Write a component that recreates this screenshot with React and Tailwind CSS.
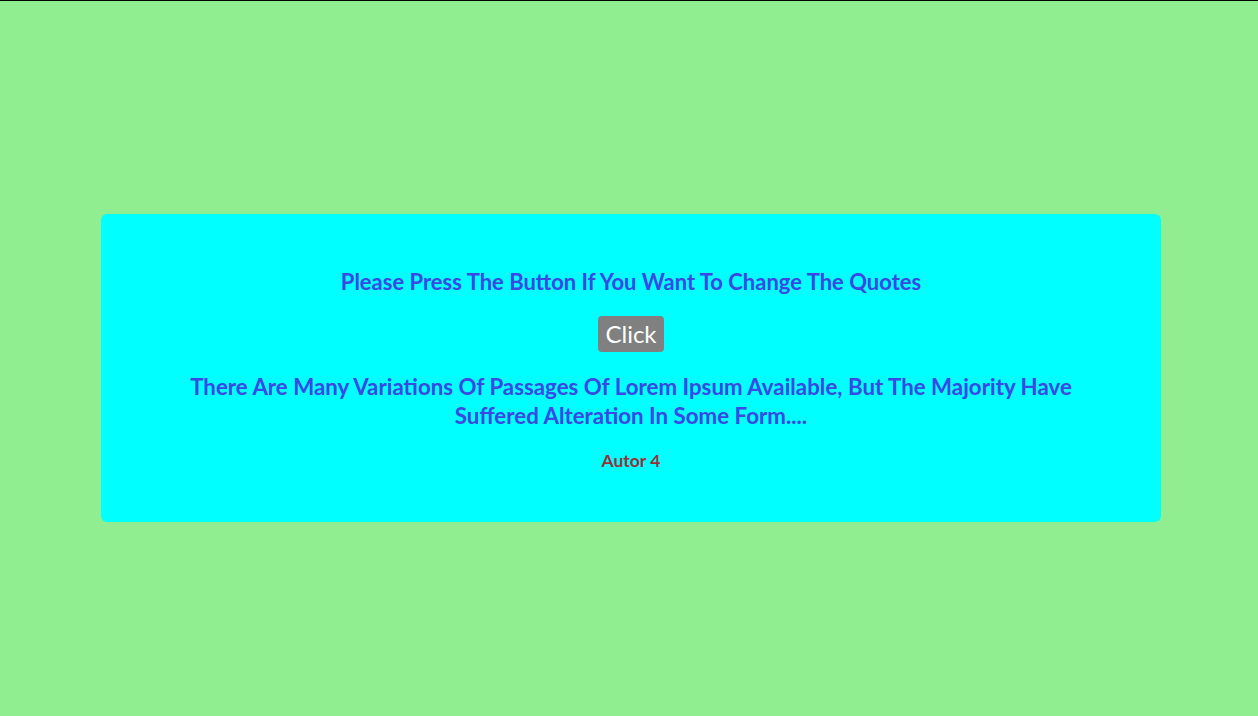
export default function App() {
  return (
    <div className="min-h-[716px] bg-[#90ee90] border-t border-black pt-[213px]" style={{ fontFamily: "Lato, 'Open Sans', sans-serif" }}>
      <div className="ml-[101px] w-[1060px] h-[308px] bg-[#00ffff] rounded-[6px] flex flex-col items-center pt-[55px]">
        <h2 className="text-[22px] font-bold text-[#3a48e6] leading-[26px] text-center">
          Please Press The Button If You Want To Change The Quotes
        </h2>
        <button className="mt-[21px] h-[36px] bg-[#808080] text-white text-[24px] leading-[36px] px-[7px] rounded-[4px]">
          Click
        </button>
        <p className="mt-[20px] w-[920px] text-[22.3px] font-bold text-[#3a48e6] leading-[29px] text-center">
          There Are Many Variations Of Passages Of Lorem Ipsum Available, But The Majority Have Suffered Alteration In Some Form....
        </p>
        <p className="mt-[21px] text-[17.5px] font-bold text-[#983238] leading-[20px]">Autor 4</p>
      </div>
    </div>
  );
}
